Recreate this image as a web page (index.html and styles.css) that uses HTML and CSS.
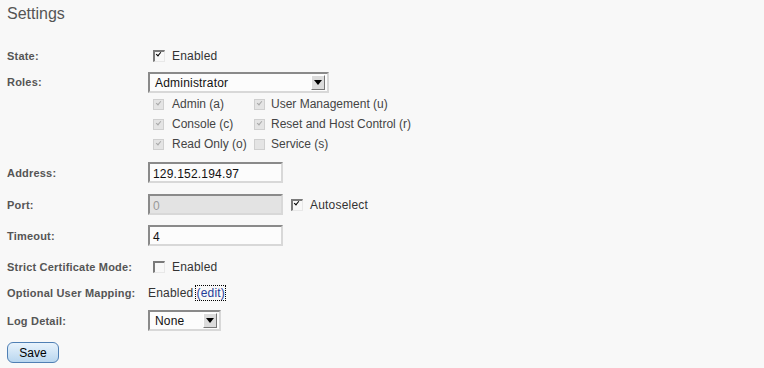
FILE: index.html
```html
<!DOCTYPE html>
<html lang="en">
<head>
    <meta charset="UTF-8">
    <title>Settings</title>
    <link rel="stylesheet" href="styles.css">
</head>
<body>

<h1>Settings</h1>

<div class="form">
    <div class="row row-state">
        <label>State:</label>
        <div class="value">
            <span class="cb checked"></span><span class="cb-text">Enabled</span>
        </div>
    </div>

    <div class="row row-roles">
        <label>Roles:</label>
        <div class="value">
            <div class="select select-roles">
                <span>Administrator</span>
                <span class="arrow"></span>
            </div>
            <div class="roles">
                <div class="role"><span class="cb off checked"></span>Admin (a)</div>
                <div class="role"><span class="cb off checked"></span>User Management (u)</div>
                <div class="role"><span class="cb off checked"></span>Console (c)</div>
                <div class="role"><span class="cb off checked"></span>Reset and Host Control (r)</div>
                <div class="role"><span class="cb off checked"></span>Read Only (o)</div>
                <div class="role"><span class="cb off"></span>Service (s)</div>
            </div>
        </div>
    </div>

    <div class="row row-address">
        <label>Address:</label>
        <div class="value">
            <div class="field">129.152.194.97</div>
        </div>
    </div>

    <div class="row row-port">
        <label>Port:</label>
        <div class="value">
            <div class="field disabled">0</div>
            <span class="cb checked auto"></span><span class="cb-text">Autoselect</span>
        </div>
    </div>

    <div class="row row-timeout">
        <label>Timeout:</label>
        <div class="value">
            <div class="field">4</div>
        </div>
    </div>

    <div class="row row-strict">
        <label>Strict Certificate Mode:</label>
        <div class="value">
            <span class="cb"></span><span class="cb-text">Enabled</span>
        </div>
    </div>

    <div class="row row-mapping">
        <label>Optional User Mapping:</label>
        <div class="value">
            Enabled<a href="#" class="edit">(edit)</a>
        </div>
    </div>

    <div class="row row-log">
        <label>Log Detail:</label>
        <div class="value">
            <div class="select select-log">
                <span>None</span>
                <span class="arrow"></span>
            </div>
        </div>
    </div>

    <button class="save">Save</button>
</div>

</body>
</html>
```

FILE: styles.css
```css
body {
    margin: 0;
    padding: 4px 7px;
    background: #f8f8f8;
    font-family: "Liberation Sans", Arial, sans-serif;
    font-size: 12px;
    color: #333;
}

h1 {
    margin: 0;
    font-size: 16px;
    line-height: 20px;
    font-weight: normal;
    color: #555;
}

.form {
    display: flex;
    flex-direction: column;
    align-items: flex-start;
}

.row {
    display: grid;
    grid-template-columns: 141px 1fr;
    align-items: center;
    min-height: 20px;
}

.row label {
    font-size: 11px;
    font-weight: bold;
    letter-spacing: 0.2px;
    color: #555;
}

.value {
    display: flex;
    align-items: center;
    letter-spacing: 0.2px;
    white-space: nowrap;
}

.row-state { margin-top: 22px; }
.row-roles { margin-top: 6px; align-items: start; }
.row-roles label { line-height: 21px; }
.row-roles .value { flex-direction: column; align-items: flex-start; }
.row-address { margin-top: 8px; }
.row-port { margin-top: 11px; }
.row-timeout { margin-top: 10px; }
.row-strict { margin-top: 11px; }
.row-mapping { margin-top: 6px; }
.row-log { margin-top: 7px; }

/* checkboxes */
.cb {
    position: relative;
    box-sizing: border-box;
    width: 12px;
    height: 12px;
    margin-left: 5px;
    border-top: 2px solid #7a7a7a;
    border-left: 2px solid #7a7a7a;
    border-bottom: 1px solid #e8e8e8;
    border-right: 1px solid #e8e8e8;
    background: #f8f8f8;
    flex-shrink: 0;
}

.cb.checked::after {
    content: "";
    position: absolute;
    left: 1px;
    top: 0;
    width: 4px;
    height: 2px;
    border-left: 1.5px solid #000;
    border-bottom: 1.5px solid #000;
    transform: rotate(-50deg);
}

.cb.off {
    border: 1px solid #cfcfcf;
    background: #e4e4e4;
    width: 11px;
    height: 11px;
}

.cb.off.checked::after {
    border-color: #a8a8a8;
    left: 2px;
    top: 1px;
}

.cb-text {
    margin-left: 7px;
}

.roles {
    display: grid;
    grid-template-columns: 106px auto;
    grid-auto-rows: 20px;
    margin-top: 1px;
    color: #444;
    letter-spacing: 0;
}

.role {
    display: flex;
    align-items: center;
    white-space: nowrap;
}

.role .cb {
    margin-right: 8px;
}

.role:nth-child(even) .cb {
    margin-left: 0;
    margin-right: 6px;
}

/* text fields */
.field {
    box-sizing: border-box;
    width: 135px;
    height: 21px;
    padding: 2px 3px 0;
    line-height: 16px;
    border-top: 2px solid #8a8a8a;
    border-left: 2px solid #8a8a8a;
    border-bottom: 2px solid #d8d8d8;
    border-right: 2px solid #d8d8d8;
    background: #fcfcfc;
    color: #111;
}

.field.disabled {
    background: #e3e3e3;
    color: #999;
}

.auto {
    margin-left: 8px;
}

/* selects */
.select {
    box-sizing: border-box;
    display: flex;
    align-items: center;
    justify-content: space-between;
    height: 21px;
    padding: 0 2px 0 5px;
    border-top: 2px solid #8a8a8a;
    border-left: 2px solid #8a8a8a;
    border-bottom: 2px solid #d8d8d8;
    border-right: 2px solid #d8d8d8;
    background: #fcfcfc;
    color: #111;
}

.select-roles { width: 181px; }
.select-log { width: 73px; }

.arrow {
    position: relative;
    box-sizing: border-box;
    width: 14px;
    height: 15px;
    background: #dcdcdc;
    border-top: 1px solid #fff;
    border-left: 1px solid #fff;
    border-bottom: 1px solid #777;
    border-right: 1px solid #777;
}

.arrow::after {
    content: "";
    position: absolute;
    left: 2px;
    top: 4px;
    border-left: 4px solid transparent;
    border-right: 4px solid transparent;
    border-top: 5px solid #000;
}

.edit {
    margin-left: 3px;
    color: #1f3c9a;
    text-decoration: none;
    outline: 1px dotted #000;
}

.save {
    margin-top: 11px;
    width: 52px;
    height: 21px;
    padding: 0;
    font-family: "Liberation Sans", Arial, sans-serif;
    font-size: 12px;
    color: #000;
    border: 1px solid #4f7fb4;
    border-radius: 6px;
    background: linear-gradient(#e8f3fc, #b9d6ef);
    cursor: pointer;
}
```
